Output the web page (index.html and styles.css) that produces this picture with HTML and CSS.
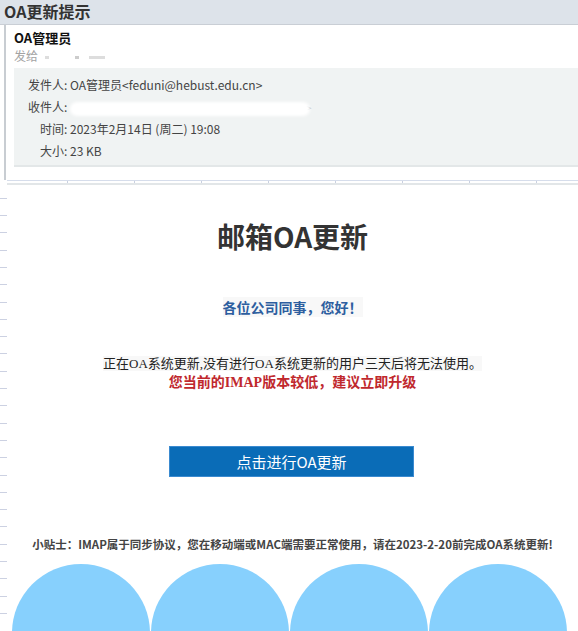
FILE: index.html
```html
<!DOCTYPE html>
<html lang="zh-CN">
<head>
<meta charset="utf-8">
<title>OA更新提示</title>
<link rel="stylesheet" href="styles.css">
</head>
<body>
<div class="topbar">OA更新提示</div>
<div class="card">
  <div class="sender">OA管理员</div>
  <div class="sendto">发给 <span class="smudge"></span></div>
  <div class="meta">
    <div class="row">发件人: OA管理员&lt;feduni@hebust.edu.cn&gt;</div>
    <div class="row">收件人: <span class="redact"></span><span class="tail">&gt;</span></div>
    <div class="row indent">时间: 2023年2月14日 (周二) 19:08</div>
    <div class="row indent">大小: 23 KB</div>
  </div>
</div>
<div class="ruler"></div>
<div class="content">
  <h1 class="title">邮箱OA更新</h1>
  <p class="greet"><span>各位公司同事，您好！</span></p>
  <p class="notice"><span class="plain">正在OA系统更新,没有进行OA系统更新的用户三天后将无法使用。</span><br><span class="warn">您当前的IMAP版本较低，建议立即升级</span></p>
  <div class="btnwrap"><a class="btn">点击进行OA更新</a></div>
  <p class="tip">小贴士：IMAP属于同步协议，您在移动端或MAC端需要正常使用，请在2023-2-20前完成OA系统更新!</p>
  <div class="circles">
    <div class="circle"></div>
    <div class="circle"></div>
    <div class="circle"></div>
    <div class="circle"></div>
  </div>
</div>
</body>
</html>
```
FILE: styles.css
```css
html, body {
  margin: 0;
  padding: 0;
  background: #fff;
  overflow: hidden;
  height: 631px;
}
body {
  font-family: "Noto Sans CJK SC", "Liberation Sans", sans-serif;
  color: #333;
}
.topbar {
  height: 24px;
  background: #dde3ea;
  border-bottom: 1px solid #c9ced5;
  font-size: 16px;
  font-weight: bold;
  line-height: 22px;
  padding-left: 4px;
  color: #333;
}
.card {
  margin-left: 4px;
  border-left: 2px solid #c8cdd2;
  padding: 5px 0 13px 8px;
}
.sender {
  font-size: 13px;
  font-weight: bold;
  line-height: 16px;
  color: #111;
}
.sendto {
  font-size: 12px;
  line-height: 16px;
  color: #a3a3a3;
  margin-top: 2px;
}
.smudge {
  display: inline-block;
  width: 60px;
  height: 3px;
  margin-left: 4px;
  vertical-align: middle;
  background: linear-gradient(90deg, #ddd 0 4px, transparent 4px 30px, #ccc 30px 34px, transparent 34px 44px, #ddd 44px 60px);
  filter: blur(0.6px);
}
.meta {
  margin-top: 4px;
  background: #f0f3f3;
  border-bottom: 2px solid #e3e7e8;
  padding: 6px 0 3px 14px;
}
.row {
  font-size: 12px;
  line-height: 22px;
  height: 22px;
  color: #444;
  white-space: nowrap;
}
.row.indent {
  padding-left: 12px;
}
.redact {
  display: inline-block;
  width: 240px;
  height: 14px;
  vertical-align: middle;
  background: #fff;
  border-radius: 7px;
  filter: blur(1.5px);
}
.tail {
  color: #bbb;
  font-size: 10px;
  margin-left: -4px;
}
.ruler {
  margin-left: 7px;
  height: 2px;
  border-top: 1px solid #d6ddeb;
  border-bottom: 2px solid #e2e6e8;
  background-image: repeating-linear-gradient(90deg, transparent 0 60px, #c9d0e0 60px 61px, transparent 61px 67px);
}
.content {
  padding: 0 0 0 7px;
  background-image: repeating-linear-gradient(180deg, transparent 0 16.3px, #ccd1e2 16.3px 17.3px);
  background-size: 7px 100%;
  background-repeat: no-repeat;
  background-position: 0 -3.5px;
  text-align: center;
  height: 445px;
}
.title {
  margin: 0;
  padding-top: 33px;
  font-size: 28px;
  line-height: 36px;
  font-weight: bold;
  color: #333;
}
.greet {
  margin: 43px 0 0;
  font-size: 14px;
  line-height: 20px;
  font-weight: bold;
  color: #2d5e9f;
}
.greet span {
  background: #f8f8f8;
}
.notice {
  margin: 37px 0 0;
  font-size: 13px;
  line-height: 19px;
  font-family: "Liberation Serif", "Noto Sans CJK SC", serif;
}
.plain {
  color: #222;
  background: #f8f8f8;
}
.warn {
  color: #c0282d;
  font-weight: bold;
  font-size: 14px;
}
.btnwrap {
  margin-top: 54px;
  display: flex;
  justify-content: center;
}
.btn {
  display: block;
  width: 243px;
  height: 29px;
  margin-left: -2px;
  background: #0a6cb7;
  border: 1px solid #3a8ad0;
  color: #fff;
  font-size: 15px;
  line-height: 29px;
  text-align: center;
}
.tip {
  margin: 59px 0 0;
  font-size: 11.5px;
  line-height: 16px;
  font-weight: bold;
  color: #444;
  white-space: nowrap;
}
.circles {
  margin: 12px 0 0 5px;
  display: flex;
  gap: 1px;
  height: 70px;
  overflow: hidden;
}
.circle {
  flex: 0 0 138px;
  height: 138px;
  border-radius: 50%;
  background: #87d0fd;
}
```
